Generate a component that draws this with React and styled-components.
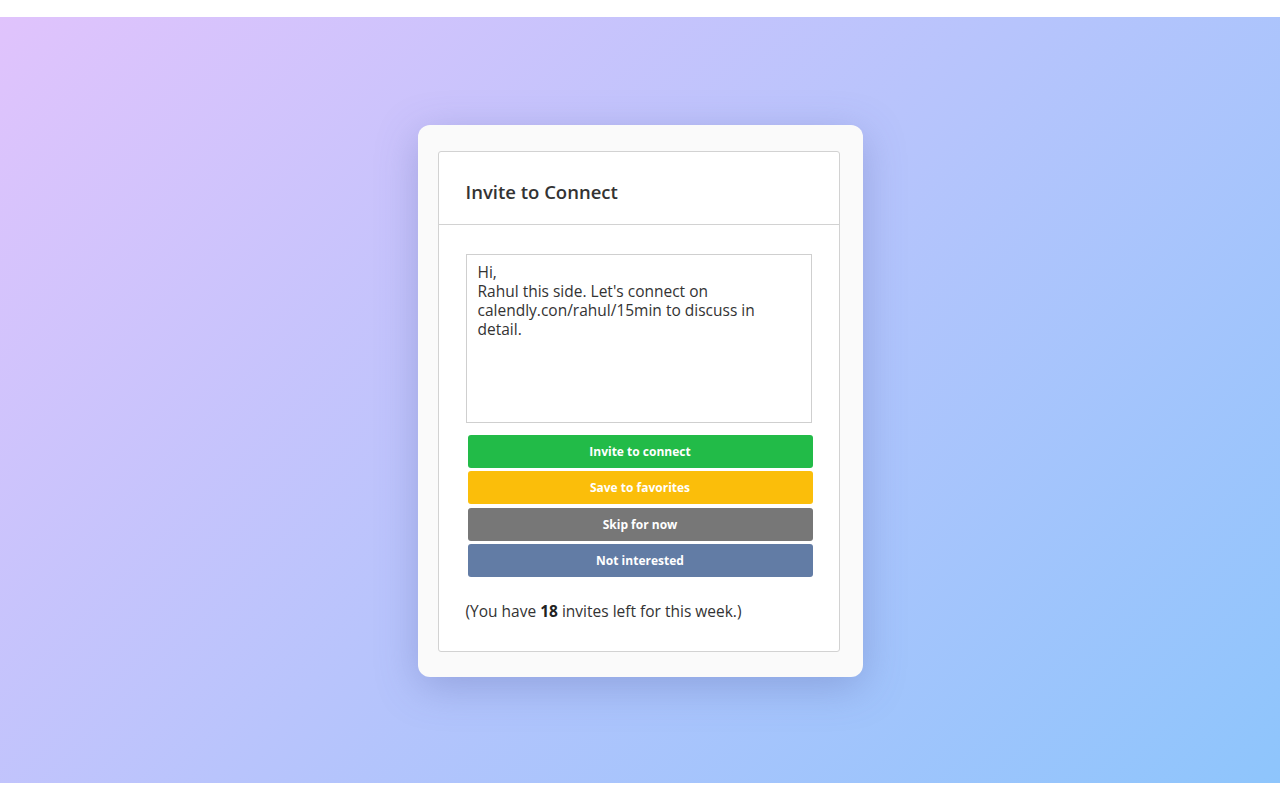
import React from 'react';
import styled, { createGlobalStyle } from 'styled-components';

const GlobalStyle = createGlobalStyle`
  html, body {
    margin: 0;
    padding: 0;
    background: #ffffff;
  }

  * {
    box-sizing: border-box;
  }
`;

const FONT = "'Open Sans', Lato, sans-serif";

const Page = styled.div`
  padding: 17px 0;
  background: #ffffff;
`;

const Backdrop = styled.div`
  height: 766px;
  display: flex;
  align-items: center;
  justify-content: center;
  background: linear-gradient(135deg, #e0c3fc 0%, #8ec5fc 100%);
  font-family: ${FONT};
`;

const Card = styled.div`
  width: 445px;
  margin-top: 2px;
  padding: 26px 23px 25px 20px;
  background: #fafafa;
  border-radius: 12px;
  box-shadow: 0 10px 40px rgba(90, 100, 170, 0.35);
`;

const Panel = styled.div`
  background: #ffffff;
  border: 1px solid #d2d2d2;
  border-radius: 3px;
`;

const Header = styled.div`
  height: 73px;
  display: flex;
  align-items: center;
  padding: 8px 27px 0;
  border-bottom: 1px solid #d2d2d2;
`;

const Title = styled.h2`
  margin: 0;
  font-size: 18.5px;
  font-weight: 600;
  color: #333333;
`;

const Body = styled.div`
  padding: 29px 27px 30px;
`;

const Message = styled.textarea`
  display: block;
  width: 346px;
  height: 169px;
  margin: 0 0 12px;
  padding: 8px 20px 8px 11px;
  border: 1px solid #cfcfcf;
  border-radius: 0;
  resize: none;
  font-family: ${FONT};
  font-size: 15.5px;
  line-height: 19px;
  color: #333333;
  background: #ffffff;
  outline: none;
`;

const Actions = styled.div`
  display: flex;
  flex-direction: column;
  gap: 3.5px;
  padding-left: 2px;
`;

const Action = styled.button`
  width: 345px;
  height: 33px;
  border: none;
  border-radius: 3px;
  background: ${({ color }) => color};
  color: #ffffff;
  font-family: ${FONT};
  font-size: 12px;
  font-weight: 700;
  cursor: pointer;
`;

const Note = styled.p`
  margin: 24px 0 0;
  font-size: 15.5px;
  line-height: 20px;
  color: #333333;

  b {
    font-weight: 700;
    color: #222222;
  }
`;

const actions = [
  { label: 'Invite to connect', color: '#22bb48' },
  { label: 'Save to favorites', color: '#fbbe0a' },
  { label: 'Skip for now', color: '#777777' },
  { label: 'Not interested', color: '#627ca5' },
];

const App = () => {
  return (
    <Page>
      <GlobalStyle />
      <Backdrop>
        <Card>
          <Panel>
            <Header>
              <Title>Invite to Connect</Title>
            </Header>
            <Body>
              <Message
                defaultValue={
                  "Hi,\nRahul this side. Let's connect on calendly.con/rahul/15min to discuss in detail."
                }
              />
              <Actions>
                {actions.map(action => (
                  <Action key={action.label} color={action.color}>
                    {action.label}
                  </Action>
                ))}
              </Actions>
              <Note>
                (You have <b>18</b> invites left for this week.)
              </Note>
            </Body>
          </Panel>
        </Card>
      </Backdrop>
    </Page>
  );
};

export default App;
